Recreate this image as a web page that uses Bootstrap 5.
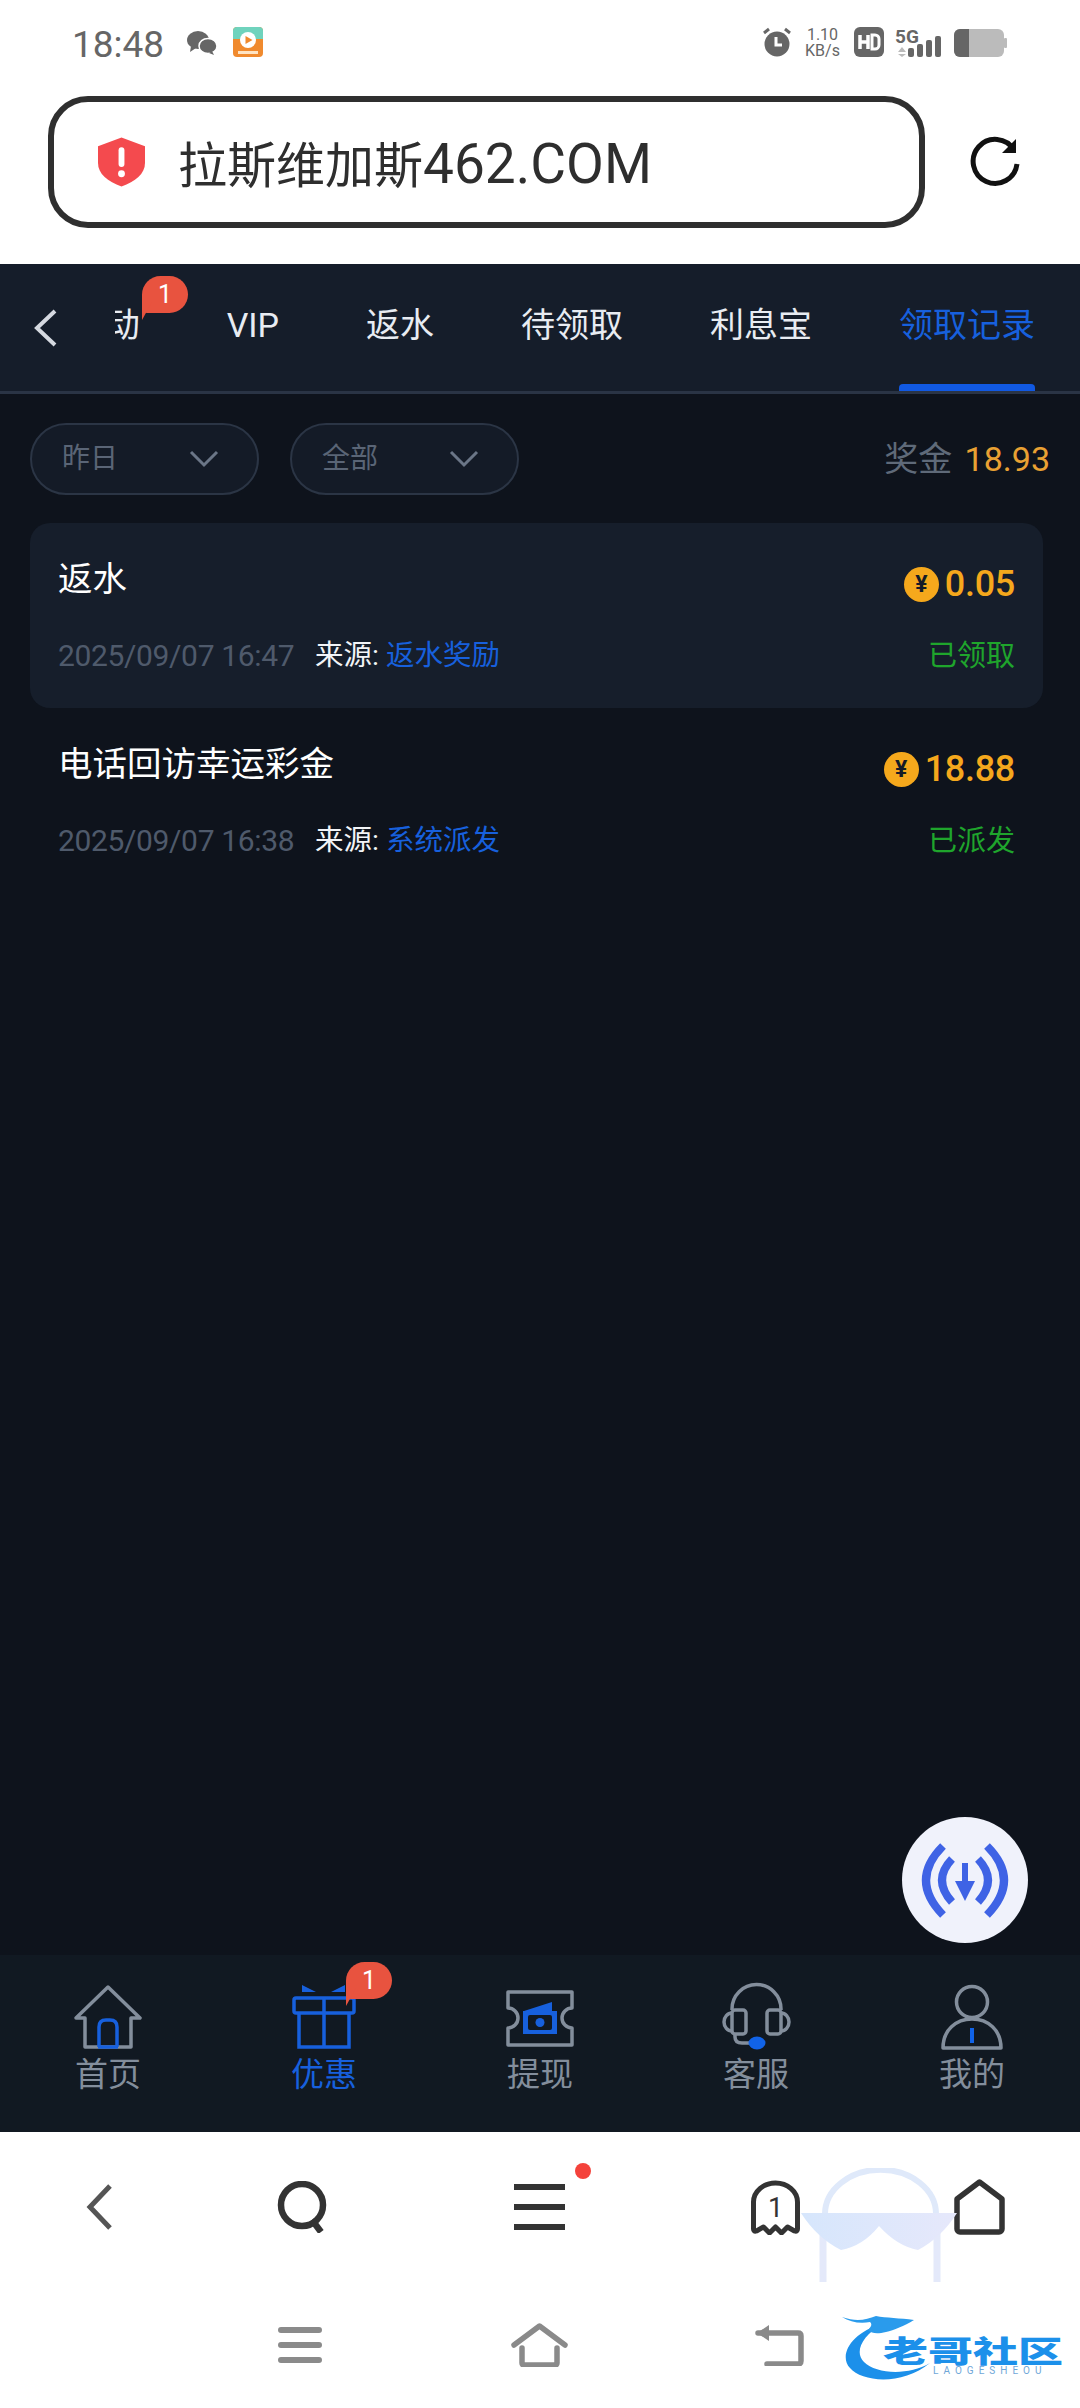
<!DOCTYPE html>
<html lang="zh-CN">
<head>
    <meta charset="UTF-8">
    <meta name="viewport" content="width=device-width, initial-scale=1.0">
    <title>领取记录</title>
    <link href="https://cdn.jsdelivr.net/npm/bootstrap@5.3.0/dist/css/bootstrap.min.css" rel="stylesheet">
    <style>
        html, body { width: 1080px; height: 2408px; overflow: hidden; }
        body { font-family: Roboto, "Noto Sans CJK SC", sans-serif; background: #fff; }
        .phone { width: 1080px; height: 2408px; position: relative; overflow: hidden; }

        .status-row { height: 88px; padding: 27px 72px 0; color: #666; }
        .status-time { font-size: 37px; line-height: 36px; width: 115px; }
        .status-speed { font-size: 16px; line-height: 16px; text-align: center; width: 35px; margin-left: 13px; white-space: nowrap; }
        .status-hd { margin-left: 14px; }
        .status-net { margin-left: 11px; }
        .status-batt { margin-left: 11px; margin-top: 2px; }

        .url-row { height: 176px; padding: 8px 0 0 48px; }
        .url-box { width: 877px; height: 132px; border: 6px solid #2f2f2f; border-radius: 40px; padding-left: 44px; }
        .url-text { font-size: 49px; color: #2e2e2e; margin-left: 33px; line-height: 1; padding-top: 4px; white-space: nowrap; }
        .url-text span { font-size: 55px; }
        .reload-icon { margin-left: 45px; margin-top: 40px; }

        .tab-strip { height: 130px; background: #151d2a; border-bottom: 3px solid #2a3445; position: relative; }
        .tab-back { width: 115px; padding: 44px 0 0 32px; flex-shrink: 0; }
        .tab-scroll { flex-grow: 1; overflow: hidden; justify-content: flex-end; gap: 87px; padding-right: 45px; position: relative; min-width: 0; }
        .tab-link { font-size: 34px; line-height: 122px; color: #e8ecf2; flex-shrink: 0; white-space: nowrap; position: relative; height: 127px; }
        .tab-link.is-on { color: #1760dd; }
        .tab-link.is-on::after { content: ""; position: absolute; left: 0; right: 0; bottom: 0; height: 7px; border-radius: 4px 4px 0 0; background: #1159e2; }

        .bubble-tag { position: absolute; width: 46px; height: 37px; background: #e8533f; border-radius: 23px 23px 23px 6px; color: #fff; font-size: 25px; line-height: 37px; text-align: center; }
        .bubble-tag::after { content: ""; position: absolute; left: 0; top: 26px; border-left: 10px solid #e8533f; border-bottom: 18px solid transparent; }
        .bubble-tabs { left: 142px; top: 12px; }
        .bubble-nav { left: 346px; top: 7px; }

        .page-body { flex-grow: 1; background: #0e131c; padding: 29px 30px 0; position: relative; }
        .filter-row { height: 72px; margin-bottom: 28px; }
        .filter-pill { width: 229px; height: 72px; border: 2px solid #2b3545; border-radius: 36px; background: #141b27; color: #5a6576; font-size: 28px; padding: 0 38px 0 30px; margin-right: 31px; }
        .bonus-text { font-size: 34px; color: #5f6a79; margin-left: auto; }
        .bonus-text b { font-weight: 400; color: #e9a133; margin-left: 4px; }

        .record-item { width: 1013px; height: 185px; border-radius: 20px; padding: 34px 28px 0; }
        .record-item.is-hl { background: #161e2b; }
        .record-name { font-size: 34.500px; color: #fff; line-height: 44px; }
        .record-amount { font-size: 36px; font-weight: 500; letter-spacing: -.3px; color: #f5a81c; line-height: 44px; margin-top: 5px; }
        .coin-mark { width: 35px; height: 35px; border-radius: 50%; background: #f5a81c; color: #141b27; font-size: 23px; font-weight: 700; line-height: 35px; text-align: center; margin-right: 6px; letter-spacing: 0; }
        .record-sub { margin-top: 30px; line-height: 40px; font-size: 28.500px; }
        .record-date { font-size: 30px; color: #4f5a6b; width: 257px; letter-spacing: -.35px; }
        .record-src { color: #f2f4f7; }
        .record-src span { color: #1760dd; }
        .record-state { margin-left: auto; font-size: 29px; color: #1fa52c; }

        .float-btn { position: absolute; right: 52px; top: 1817px; width: 126px; height: 126px; border-radius: 50%; background: #f0f2fb; }

        .tabbar { height: 177px; background: #111922; padding-top: 27px; position: relative; }
        .tabbar-item { width: 216px; color: #838e9c; font-size: 33px; line-height: 40px; }
        .tabbar-item.is-on { color: #1760dd; }
        .tabbar-item svg { display: block; margin-bottom: 3px; }

        .tool-row { height: 150px; background: #fff; }
        .tool-back { margin-left: 86px; }
        .tool-find { margin-left: 165px; }
        .tool-menu { margin-left: 187px; position: relative; }
        .tool-tabs { margin-left: 185px; }
        .tool-home { margin-left: 153px; }
        .menu-dot { position: absolute; left: 61px; top: -21px; width: 16px; height: 16px; border-radius: 50%; background: #f4423b; }

        .sys-row { height: 126px; background: #fff; }
        .sys-menu { margin-left: 278px; }
        .sys-home { margin-left: 189px; }
        .sys-back { margin-left: 187px; }

        .mark-hat { position: absolute; left: 801px; top: 2168px; }
        .mark-logo { position: absolute; left: 842px; top: 2310px; width: 225px; height: 75px; }
        .mark-cn { position: absolute; left: 41px; top: 24px; font-size: 30px; line-height: 30px; font-weight: 900; color: #1c90ea; font-family: "Noto Sans CJK SC", sans-serif; white-space: nowrap; transform: scaleX(1.5); transform-origin: left center; }
        .mark-en { position: absolute; left: 91px; top: 56px; font-size: 10px; line-height: 1; letter-spacing: 5px; color: #6fa7d8; white-space: nowrap; }
    </style>
</head>
<body>
<div class="phone d-flex flex-column">

    <!-- status bar -->
    <div class="status-row d-flex align-items-start flex-shrink-0">
        <div class="status-time">18:48</div>
        <svg width="30" height="24" viewBox="0 0 30 24" class="mt-1"><ellipse cx="11" cy="9" rx="11" ry="9" fill="#666"/><path d="M4 15l-1 6 6-4z" fill="#666"/><ellipse cx="21" cy="15" rx="9" ry="7.5" fill="#666" stroke="#fff" stroke-width="1.5"/><path d="M25 20l2 4-5-2z" fill="#666"/></svg>
        <svg width="30" height="30" viewBox="0 0 30 30" class="ms-3"><rect width="30" height="30" rx="4" fill="#f08a2e"/><path d="M0 4a4 4 0 0 1 4-4h22a4 4 0 0 1 4 4v8H0z" fill="#6fd3bd"/><circle cx="15" cy="13" r="8" fill="#fff"/><path d="M12.500 9l7 4-7 4z" fill="#f08a2e"/><rect x="5" y="24" width="20" height="3" fill="#ffe3c2"/></svg>
        <div class="flex-grow-1"></div>
        <svg width="30" height="30" viewBox="0 0 30 30"><circle cx="15" cy="17" r="12.500" fill="#666"/><path d="M14 10v8h6" fill="none" stroke="#fff" stroke-width="3"/><path d="M2 6l5-4M28 6l-5-4" stroke="#666" stroke-width="3"/></svg>
        <div class="status-speed">1.10<br>KB/s</div>
        <svg class="status-hd" width="30" height="30" viewBox="0 0 30 30"><rect width="30" height="30" rx="6" fill="#666"/><path d="M6 8v14M14 8v14M6 15h8" stroke="#fff" stroke-width="3.500" fill="none"/><path d="M18 8h3a4 4 0 0 1 4 4v6a4 4 0 0 1-4 4h-3z" stroke="#fff" stroke-width="3" fill="none"/></svg>
        <svg class="status-net" width="48" height="30" viewBox="0 0 48 30"><path d="M7 20l4 5H3zM3 27h8l-4 3z" fill="#bbb"/><rect x="13" y="21" width="6" height="9" rx="2" fill="#666"/><rect x="22" y="17" width="6" height="13" rx="2" fill="#666"/><rect x="31" y="13" width="6" height="17" rx="2" fill="#666"/><rect x="40" y="9" width="6" height="21" rx="2" fill="#666"/><text x="0" y="16" font-size="19" font-weight="700" fill="#666" font-family="Roboto">5G</text></svg>
        <svg class="status-batt" width="54" height="28" viewBox="0 0 54 28"><rect width="50" height="28" rx="6" fill="#bbb"/><path d="M6 0h9v28H6a6 6 0 0 1-6-6V6a6 6 0 0 1 6-6z" fill="#666"/><rect x="50" y="9" width="3" height="10" rx="1" fill="#bbb"/></svg>
    </div>

    <!-- address bar -->
    <div class="url-row d-flex flex-shrink-0">
        <div class="url-box d-flex align-items-center">
            <svg width="47" height="50" viewBox="0 0 48 50"><path d="M24 0l24 9v17c0 11-10 19-24 24C10 45 0 37 0 26V9z" fill="#f44a4e"/><rect x="21" y="10" width="6" height="20" rx="3" fill="#fff"/><circle cx="24" cy="37" r="3.500" fill="#fff"/></svg>
            <div class="url-text">拉斯维加斯<span>462.COM</span></div>
        </div>
        <svg class="reload-icon" width="50" height="52" viewBox="0 0 50 52"><path d="M44 14A22 22 0 1 0 47 28" fill="none" stroke="#111" stroke-width="5"/><path d="M46 3v14H32z" fill="#111"/></svg>
    </div>

    <!-- tabs -->
    <div class="tab-strip d-flex flex-shrink-0">
        <div class="tab-back"><svg width="28" height="40" viewBox="0 0 28 40"><path d="M23 3L5 20l18 17" fill="none" stroke="#d5d9e0" stroke-width="4"/></svg></div>
        <div class="tab-scroll d-flex">
            <div class="tab-link">优惠活动</div>
            <div class="tab-link">VIP</div>
            <div class="tab-link">返水</div>
            <div class="tab-link">待领取</div>
            <div class="tab-link">利息宝</div>
            <div class="tab-link is-on">领取记录</div>
        </div>
        <div class="bubble-tag bubble-tabs">1</div>
    </div>

    <!-- records -->
    <div class="page-body">
        <div class="filter-row d-flex align-items-center">
            <div class="filter-pill d-flex align-items-center justify-content-between">昨日
                <svg width="30" height="18" viewBox="0 0 30 18"><path d="M2 2l13 13L28 2" fill="none" stroke="#6b7687" stroke-width="3"/></svg>
            </div>
            <div class="filter-pill d-flex align-items-center justify-content-between">全部
                <svg width="30" height="18" viewBox="0 0 30 18"><path d="M2 2l13 13L28 2" fill="none" stroke="#6b7687" stroke-width="3"/></svg>
            </div>
            <div class="bonus-text">奖金 <b>18.93</b></div>
        </div>

        <div class="record-item is-hl">
            <div class="d-flex justify-content-between">
                <div class="record-name">返水</div>
                <div class="record-amount d-flex align-items-center"><span class="coin-mark">¥</span>0.05</div>
            </div>
            <div class="record-sub d-flex">
                <div class="record-date">2025/09/07 16:47</div>
                <div class="record-src">来源: <span>返水奖励</span></div>
                <div class="record-state">已领取</div>
            </div>
        </div>

        <div class="record-item">
            <div class="d-flex justify-content-between">
                <div class="record-name">电话回访幸运彩金</div>
                <div class="record-amount d-flex align-items-center"><span class="coin-mark">¥</span>18.88</div>
            </div>
            <div class="record-sub d-flex">
                <div class="record-date">2025/09/07 16:38</div>
                <div class="record-src">来源: <span>系统派发</span></div>
                <div class="record-state">已派发</div>
            </div>
        </div>
    </div>

    <!-- bottom tabs -->
    <div class="tabbar d-flex flex-shrink-0">
        <div class="tabbar-item d-flex flex-column align-items-center">
            <svg width="70" height="70" viewBox="0 0 70 70"><path d="M12 65V36H3L35 5l32 31H58v29z" fill="none" stroke="#838e9c" stroke-width="3.500" stroke-linejoin="round"/><path d="M26 65V45q0-7 7-7h4q7 0 7 7v20" fill="none" stroke="#1760dd" stroke-width="3.500"/><path d="M25 65h20" stroke="#1760dd" stroke-width="3.500"/></svg>
            首页
        </div>
        <div class="tabbar-item is-on d-flex flex-column align-items-center">
            <svg width="70" height="70" viewBox="0 0 70 70"><path d="M13 3l14 7H13zM42 10h14V3z" fill="#1760dd"/><rect x="5" y="16" width="60" height="15" rx="2" fill="none" stroke="#1760dd" stroke-width="3.500"/><path d="M10 31v34h50V31M35 16v49" fill="none" stroke="#1760dd" stroke-width="3.500"/></svg>
            优惠
        </div>
        <div class="tabbar-item d-flex flex-column align-items-center">
            <svg width="70" height="70" viewBox="0 0 70 70"><path d="M3 10h64v16a10 10 0 0 0 0 20v17H3V46a10 10 0 0 0 0-20z" fill="none" stroke="#838e9c" stroke-width="3.500" stroke-linejoin="round"/><path d="M19 29l28-9v9zM18 29h34v23H18z" fill="#1760dd"/><rect x="23" y="33" width="24" height="15" rx="2" fill="#111922"/><circle cx="35" cy="40.500" r="4.500" fill="#1760dd"/></svg>
            提现
        </div>
        <div class="tabbar-item d-flex flex-column align-items-center">
            <svg width="70" height="70" viewBox="0 0 70 70"><path d="M11 28V27a24 24 0 0 1 49 0v1" fill="none" stroke="#838e9c" stroke-width="3.500"/><rect x="11" y="28" width="14" height="24" rx="3" fill="none" stroke="#838e9c" stroke-width="3.500"/><rect x="46" y="28" width="14" height="24" rx="3" fill="none" stroke="#838e9c" stroke-width="3.500"/><path d="M11 31a8 9 0 0 0 0 18M60 31a8 9 0 0 1 0 18M14 52v3q0 6 7 6h8" fill="none" stroke="#838e9c" stroke-width="3.500"/><ellipse cx="36" cy="61" rx="8.500" ry="6.500" fill="#1163e8"/></svg>
            客服
        </div>
        <div class="tabbar-item d-flex flex-column align-items-center">
            <svg width="70" height="70" viewBox="0 0 70 70"><circle cx="35" cy="20" r="15.500" fill="none" stroke="#838e9c" stroke-width="3.500"/><path d="M6 66C6 48 19 37 35 37s29 11 29 29z" fill="none" stroke="#838e9c" stroke-width="3.500" stroke-linejoin="round"/><path d="M35 46v15" stroke="#1163e8" stroke-width="4"/></svg>
            我的
        </div>
        <div class="bubble-tag bubble-nav">1</div>
    </div>

    <!-- browser toolbar -->
    <div class="tool-row d-flex align-items-center flex-shrink-0">
        <svg class="tool-back" width="26" height="46" viewBox="0 0 26 46"><path d="M24 2L4 23l20 21" fill="none" stroke="#555" stroke-width="5"/></svg>
        <svg class="tool-find" width="50" height="52" viewBox="0 0 50 52"><circle cx="25" cy="24" r="21" fill="none" stroke="#333" stroke-width="6.500"/><path d="M35 39l9 12" stroke="#333" stroke-width="6.500"/></svg>
        <div class="tool-menu">
            <svg class="d-block" width="51" height="46" viewBox="0 0 51 46"><path d="M0 3h51M0 23h51M0 43h51" stroke="#333" stroke-width="6"/></svg>
            <div class="menu-dot"></div>
        </div>
        <svg class="tool-tabs" width="51" height="55" viewBox="0 0 50 55"><path d="M3 49V22a22 19 0 0 1 44 0v27q0 3-3 2l-7-4-6 6-6-6-6 6-6-6-7 4q-3 1-3-2z" fill="none" stroke="#333" stroke-width="5" stroke-linejoin="round"/><text x="25" y="37" text-anchor="middle" font-size="27" fill="#333" font-family="Roboto">1</text></svg>
        <svg class="tool-home" width="51" height="56" viewBox="0 0 51 56"><path d="M3 20L25.500 3 48 20v30a3 3 0 0 1-3 3H6a3 3 0 0 1-3-3z" fill="none" stroke="#333" stroke-width="5.500" stroke-linejoin="round"/></svg>
    </div>

    <!-- system nav -->
    <div class="sys-row d-flex align-items-center flex-shrink-0">
        <svg class="sys-menu" width="44" height="36" viewBox="0 0 44 36"><path d="M3 3h38M3 18h38M3 33h38" stroke="#8a8a8a" stroke-width="6" stroke-linecap="round"/></svg>
        <svg class="sys-home" width="57" height="44" viewBox="0 0 57 44"><path d="M3 22L28.500 3 54 22" fill="none" stroke="#8a8a8a" stroke-width="5.500" stroke-linecap="round" stroke-linejoin="round"/><path d="M11 25v15q0 2 2 2h31q2 0 2-2V25" fill="none" stroke="#8a8a8a" stroke-width="5.500" stroke-linecap="round"/></svg>
        <svg class="sys-back" width="49" height="42" viewBox="0 0 49 42"><path d="M3 9h40q3 0 3 3v25q0 3-3 3H12" fill="none" stroke="#8a8a8a" stroke-width="5.500" stroke-linecap="round"/><path d="M2 9l12-8v16z" fill="#8a8a8a"/></svg>
    </div>

    <!-- download button, watermarks -->
    <div class="float-btn">
        <svg width="126" height="126" viewBox="0 0 126 126"><path d="M41 29Q7 63 41 98M85 29q34 34 0 69M50 42Q30 63 50 85M76 42q20 21 0 43" fill="none" stroke="#3f63e5" stroke-width="8"/><path d="M63 46v24" stroke="#3f63e5" stroke-width="6"/><path d="M53 64h20l-10 20z" fill="#3f63e5"/></svg>
    </div>

    <svg class="mark-hat" width="156" height="114" viewBox="0 0 156 114">
        <defs><linearGradient id="lensFill" x1="0" x2="1" y1="0" y2="0"><stop offset="0" stop-color="#d6e6fc"/><stop offset="1" stop-color="#e6e8fb"/></linearGradient></defs>
        <path d="M24 46A54 43 0 0 1 135 46" fill="none" stroke="#dfe9fa" stroke-width="6"/>
        <path d="M22 60v54M136 60v54" stroke="#e4e9fa" stroke-width="7"/>
        <path d="M0 45h156Q140 70 117 82 96 78 78 58 62 78 40 82 16 70 0 45z" fill="url(#lensFill)"/>
    </svg>

    <div class="mark-logo">
        <svg width="225" height="75" viewBox="0 0 225 75"><path d="M40 14C10 22-4 45 8 58c12 14 52 18 80-5-22 13-54 11-66-1-10-10-2-26 18-38z" fill="#1c90ea"/><path d="M0 7c14 5 24 3 34-1 10 2 24 2 38 4-10 6-20 10-28 12-8 2-14 2-18-2 4-4 4-6 2-8C18 14 8 12 0 7z" fill="#2a9bec"/></svg>
        <div class="mark-cn">老哥社区</div>
        <div class="mark-en">LAOGESHEOU</div>
    </div>
</div>
<script src="https://cdn.jsdelivr.net/npm/bootstrap@5.3.0/dist/js/bootstrap.bundle.min.js"></script>
</body>
</html>
